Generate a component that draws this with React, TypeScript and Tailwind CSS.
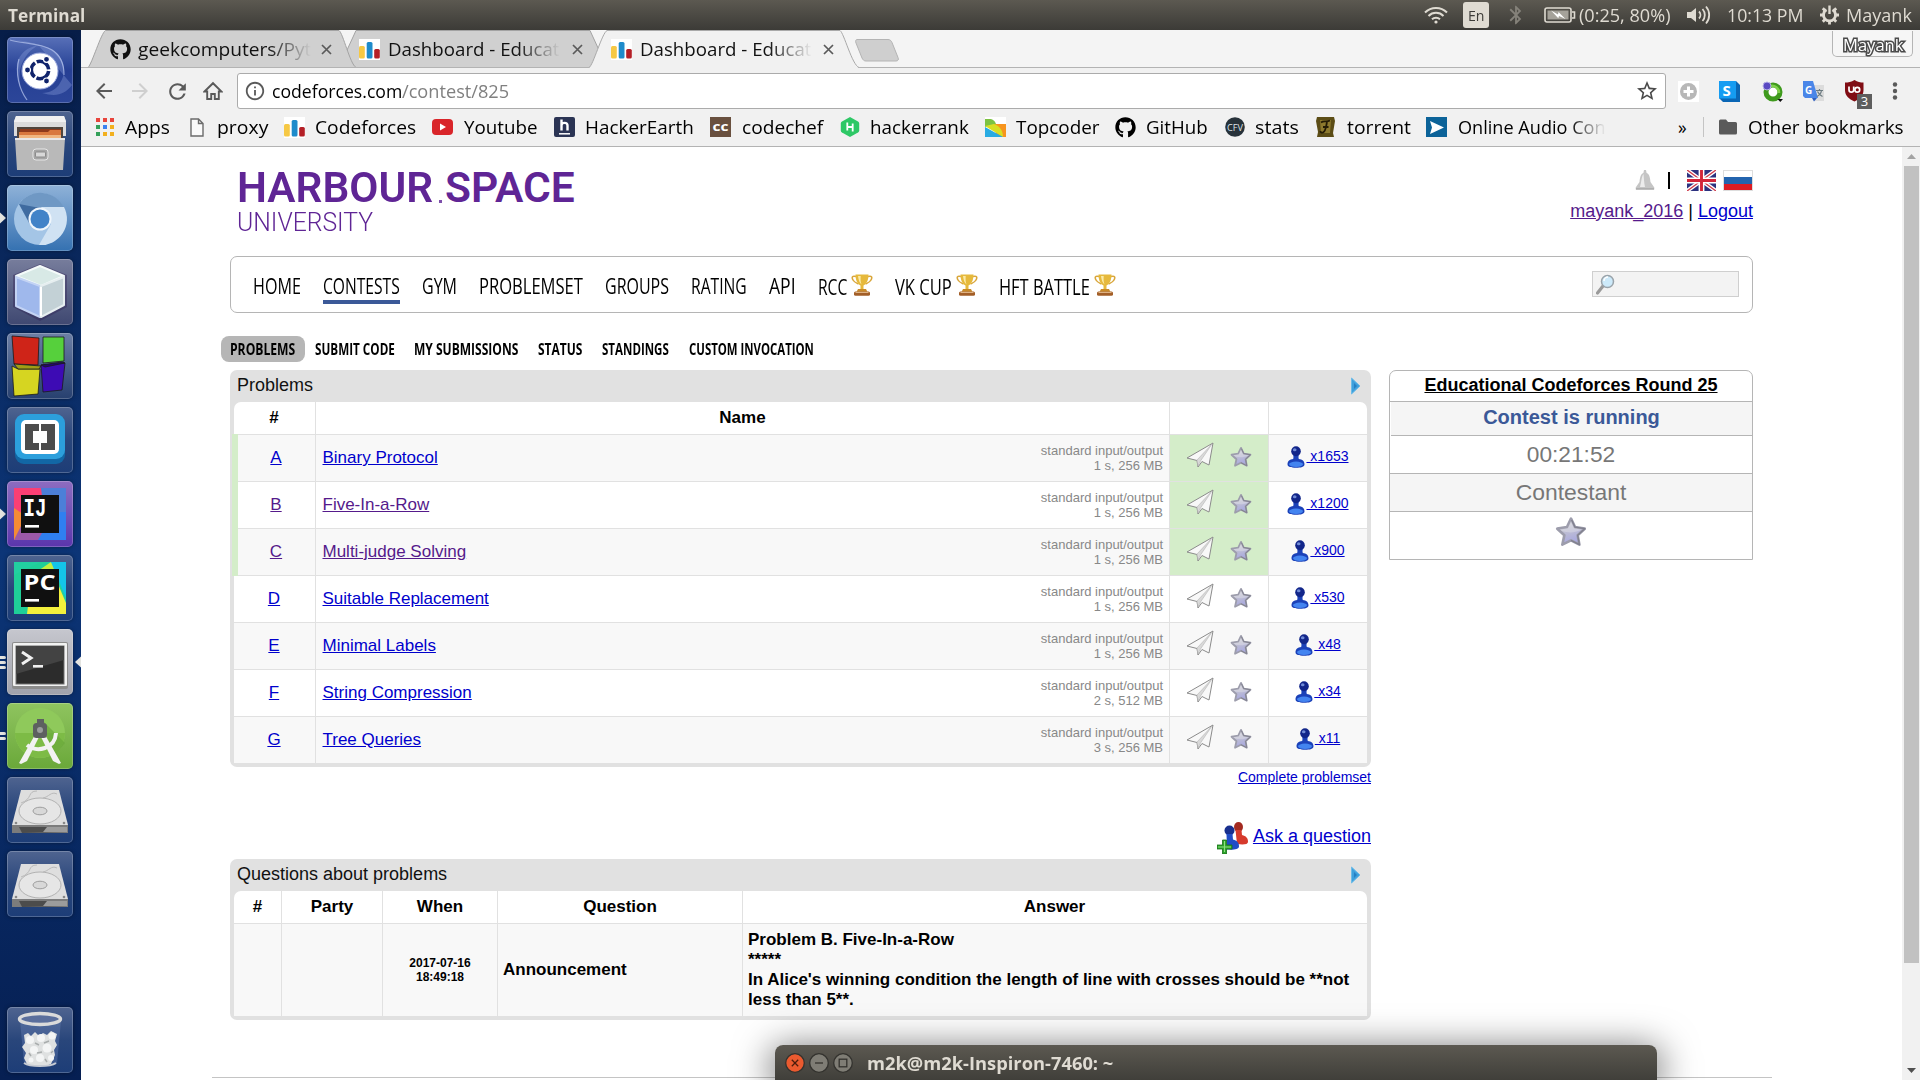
import React, { useLayoutEffect, useRef } from "react";
import { FaGithub } from "react-icons/fa";
import {
  MdArrowBack,
  MdArrowForward,
  MdBluetooth,
  MdInfoOutline,
  MdRefresh,
  MdStarBorder,
} from "react-icons/md";

/* Text stretched or condensed horizontally so that it fills its own box. */
function Fit({ className = "", children }: { className?: string; children: React.ReactNode }) {
  const outer = useRef<HTMLSpanElement>(null);
  const inner = useRef<HTMLSpanElement>(null);
  useLayoutEffect(() => {
    if (outer.current && inner.current) {
      const ratio = outer.current.clientWidth / inner.current.offsetWidth;
      inner.current.style.transform = `scaleX(${ratio})`;
    }
  });
  return (
    <span ref={outer} className={"inline-block shrink-0 whitespace-nowrap text-left " + className}>
      <span ref={inner} className="inline-block origin-left">
        {children}
      </span>
    </span>
  );
}

/* ---------- top panel ---------- */

function TopPanel() {
  return (
    <header className="flex h-[30px] shrink-0 items-center bg-linear-to-b from-[#5c5951] to-[#3c3b37] text-[17.5px] leading-[30px] text-[#dfdbd2]">
      <Fit className="ml-[8px] w-[77px] font-bold">Terminal</Fit>
      <svg className="ml-[1339px] shrink-0" width="24" height="20" viewBox="0 0 24 20" fill="none" stroke="#dfdbd2" strokeWidth="2">
        <path d="M1 7.5a15.5 15.5 0 0 1 22 0M4.5 11a10.500 10.500 0 0 1 15 0M8 14.300a5.700 5.700 0 0 1 8 0" />
        <circle cx="12" cy="17" r="1.600" fill="#dfdbd2" stroke="none" />
      </svg>
      <span className="ml-[15px] flex h-[26px] w-[26px] shrink-0 items-center justify-center rounded-[3px] bg-[#dfdbd2] text-[#3c3b37]">
        <Fit className="w-[17px] text-[15px]">En</Fit>
      </span>
      <MdBluetooth className="ml-[16px] shrink-0 text-[#85827a]" size={22} />
      <svg className="ml-[17px] shrink-0" width="32" height="16" viewBox="0 0 32 16">
        <rect x="1" y="1" width="26" height="14" rx="2" fill="none" stroke="#dfdbd2" strokeWidth="1.600" />
        <rect x="3.500" y="3.500" width="21" height="9" fill="#a5a29a" />
        <path d="M28 5h2.500v6H28" fill="none" stroke="#dfdbd2" strokeWidth="1.600" />
        <path d="M7 3.500l7 4 .5-2.500 7 7-6.500-3-.7 2.300z" fill="#fff" />
      </svg>
      <Fit className="ml-[3px] w-[92px]">(0:25, 80%)</Fit>
      <svg className="ml-[15px] shrink-0" width="25" height="20" viewBox="0 0 25 20">
        <path d="M1 7h4l5-4v14l-5-4H1z" fill="#dfdbd2" />
        <path d="M13 6.500a5 5 0 0 1 0 7M16.500 4a9 9 0 0 1 0 12M20 1.500a13 13 0 0 1 0 17" fill="none" stroke="#dfdbd2" strokeWidth="1.800" />
      </svg>
      <Fit className="ml-[16px] w-[76px]">10:13 PM</Fit>
      <svg className="ml-[16px] shrink-0" width="21" height="20" viewBox="-10.500 -10 21 20" fill="none" stroke="#dfdbd2">
        <path d="M-3 -5.200a6 6 0 1 0 6 0" strokeWidth="2.800" />
        <path d="M0 -9.500V-1" strokeWidth="2.400" />
        <path d="M-9.500 0h3M9.500 0h-3M0 9.500v-3M-6.700 6.700l2.100-2.100M6.700 6.700l-2.100-2.100M-6.700 -6.700l2.100 2.100M6.700 -6.700l-2.100 2.100" strokeWidth="2.800" />
      </svg>
      <Fit className="ml-[6px] w-[66px]">Mayank</Fit>
    </header>
  );
}

/* ---------- launcher ---------- */

function UbuntuIcon() {
  return (
    <svg width="66" height="66" viewBox="0 0 66 66">
      <path d="M3 2c25 4 48 6 54 31-1-14-11-24-26-24C21 9 12 17 10 27c-1 10 3 30 12 37C8 52 8 20 32 8" fill="#8fa3e0" opacity=".35" />
      <path d="M33 10a23 23 0 0 1 20 36c-3 6-10 10-18 10 14 4 22 2 30-8" fill="#8fa3e0" opacity=".35" />
      <path d="M3 3c20 6 54 0 54 35M12 22c-4 14 0 30 8 41" fill="none" stroke="#b8c6ee" strokeWidth="1.200" opacity=".7" />
      <circle cx="33" cy="34" r="18" fill="#fff" stroke="#9aa8dd" strokeWidth="1" />
      <circle cx="33" cy="33" r="8.700" fill="none" stroke="#10236b" strokeWidth="3.600" strokeDasharray="16.200 2" strokeDashoffset="-1" />
      <g fill="#10236b" stroke="#fff" strokeWidth="1.200">
        <circle cx="20.500" cy="33" r="3" />
        <circle cx="39.500" cy="22.300" r="3" />
        <circle cx="39.500" cy="44" r="3" />
      </g>
    </svg>
  );
}

function FilesIcon() {
  return (
    <svg width="66" height="66" viewBox="0 0 66 66">
      <path d="M9 5h48l2 5v15H7V10z" fill="#dcdcdc" />
      <path d="M9 5h48l2 6H7z" fill="#f1f1f1" />
      <path d="M10 16h46v12H10z" fill="#50463e" />
      <path d="M13 18h41v3H13z" fill="#8e3a1c" />
      <path d="M12 21h29l2-2h11v8H12z" fill="#d9783e" />
      <path d="M12 24h42v4H12z" fill="#f0b680" />
      <path d="M8 27h50l-2 32H10z" fill="#b9b9b9" />
      <path d="M8 27h50v2H8z" fill="#e8e8e8" />
      <rect x="26" y="38" width="15" height="11" rx="3" fill="#a5a5a5" stroke="#e6e6e6" />
      <rect x="28.500" y="41" width="10" height="5" rx="1" fill="#d8d8d8" stroke="#8b8b8b" />
    </svg>
  );
}

function ChromiumIcon() {
  return (
    <svg width="66" height="66" viewBox="0 0 66 66">
      <circle cx="33" cy="34" r="26" fill="#a4c5e6" />
      <path d="M12 19a26 26 0 0 1 45 4H34L22 38z" fill="#6f98c4" />
      <path d="M12 19l11 20 10-16z" fill="#3f6ba0" />
      <path d="M34 22h23a26 26 0 0 1-25 38l12-21z" fill="#d0e2f3" />
      <circle cx="33" cy="34" r="11.500" fill="#f0f6fc" />
      <circle cx="33" cy="34" r="9.500" fill="#4283c8" />
    </svg>
  );
}

function CubeIcon() {
  return (
    <svg width="66" height="66" viewBox="0 0 66 66">
      <path d="M33 5l27 11v32L33 62 6 48V16z" fill="#2b1a4d" opacity=".35" />
      <path d="M33 7l24 10-23 10L9 17z" fill="#d8e9e6" stroke="#f4fbfa" strokeLinejoin="round" strokeWidth="2" />
      <path d="M9 18l24 9v31L9 47z" fill="#9fb8ec" stroke="#c3d3f4" strokeLinejoin="round" strokeWidth="2" />
      <path d="M57 18l-23 9v31l23-12z" fill="#c3d1d6" stroke="#e6eef0" strokeLinejoin="round" strokeWidth="2" />
      <path d="M34 28v29" stroke="#fff" strokeWidth="2" />
    </svg>
  );
}

function BlocksIcon() {
  return (
    <svg width="66" height="66" viewBox="0 0 66 66" stroke="#1a1a1a" strokeWidth=".800">
      <path d="M5 3l27 2-1 27-24-1z" fill="#cf2418" />
      <path d="M36 4h21v24l-21 2z" fill="#56d03c" />
      <path d="M5 33l6 3h22l-2 25-24 2z" fill="#d6d521" />
      <path d="M11 36h21l2-3-27-2z" fill="#a09d16" />
      <path d="M34 32l24-2-3 27-19 2z" fill="#3d0bb4" />
      <path d="M34 32l4 2 20-4-3-1z" fill="#24056f" />
    </svg>
  );
}

function BracketsIcon() {
  return (
    <svg width="66" height="66" viewBox="0 0 66 66">
      <rect x="8" y="9" width="50" height="48" rx="9" fill="#1267a5" />
      <rect x="8" y="7" width="50" height="45" rx="9" fill="#2c9fdc" />
      <rect x="14" y="13" width="38" height="34" rx="5" fill="#fff" />
      <path d="M18 17h14v7h-6v12h6v7H18zM48 17H34v7h6v12h-6v7h14z" fill="#4c4c4c" />
    </svg>
  );
}

function IdeIcon({ name }: { name: "IJ" | "PC" }) {
  const ij = name === "IJ";
  return (
    <svg width="66" height="66" viewBox="0 0 66 66">
      <rect x="7" y="7" width="52" height="52" fill={ij ? "#2f7ff0" : "#22cfa0"} />
      {ij ? (
        <>
          <path d="M7 7h27l6 14-33 14z" fill="#fb3f74" />
          <path d="M7 27l12 8-8 24H7z" fill="#f58b35" />
          <path d="M7 59l12-24 20 10-8 14z" fill="#9b59a8" />
          <path d="M34 7h25v24H37z" fill="#4c7fd8" />
        </>
      ) : (
        <>
          <path d="M7 59V20L34 7h8l-6 40-18 12z" fill="#1fcf98" />
          <path d="M28 18L44 7l9 12-8 4z" fill="#c5ee3f" />
          <path d="M44 7h15v36z" fill="#14c4e8" />
          <path d="M48 22l11 26v11H20l2-16z" fill="#f3f03c" />
        </>
      )}
      <rect x="14" y="14" width="38" height="38" fill="#101010" />
      <text x="16.500" y="35" fill="#fff" fontSize={ij ? 25 : 22} fontWeight="700" fontFamily={ij ? "Liberation Mono" : "Open Sans"} textLength={ij ? 23 : 32} lengthAdjust="spacingAndGlyphs">
        {name}
      </text>
      <rect x="18" y="44" width="14" height="2.600" fill="#fff" />
    </svg>
  );
}

function TerminalIcon() {
  return (
    <svg width="66" height="66" viewBox="0 0 66 66">
      <rect x="5" y="13" width="56" height="47" rx="2" fill="#8c8c8c" />
      <rect x="6" y="14" width="54" height="43" rx="1" fill="#f2f2f2" />
      <rect x="9" y="17" width="48" height="38" fill="#2c2c2c" stroke="#6e6e6e" />
      <path d="M9 17h48v14L9 45z" fill="#434343" />
      <path d="M15 23l9 6-9 6" fill="none" stroke="#f0f0f0" strokeWidth="3" />
      <rect x="26" y="36" width="10" height="2.600" fill="#f0f0f0" />
    </svg>
  );
}

function StudioIcon() {
  return (
    <svg width="66" height="66" viewBox="0 0 66 66">
      <circle cx="33" cy="30" r="25" fill="#8fc95b" />
      <path d="M8 30h50a25 25 0 0 1-50 0z" fill="#7dbb46" />
      <path d="M36 18l22 22-12 14z" fill="#6aa83a" opacity=".7" />
      <path d="M29 30L12 60l2 1 6-3 12-24zM37 30l17 30-2 1-6-3-12-24z" fill="#f2f2f2" />
      <path d="M20 42c10 8 28 4 29-12" fill="none" stroke="#f2f2f2" strokeWidth="4" />
      <rect x="30" y="16" width="7" height="7" fill="#5d6060" />
      <rect x="26" y="20" width="14" height="15" rx="3.500" fill="#5d6060" />
      <circle cx="33" cy="27" r="3" fill="#9a9d9d" />
    </svg>
  );
}

function DiskIcon() {
  return (
    <svg width="66" height="66" viewBox="0 0 66 66">
      <path d="M14 13h38l9 35H5z" fill="#dedede" />
      <path d="M5 48h56v8H5z" fill="#7c7c7c" />
      <path d="M12 50h48v5l-45 1z" fill="#4c4c4c" />
      <path d="M40 50h20v5H36z" fill="#9c9c9c" />
      <ellipse cx="33" cy="34" rx="21" ry="13" fill="#e6e6e6" stroke="#b2b2b2" />
      <path d="M30 14c-10 0-4 8-16 12M36 21c6-1 8-7 14-4" fill="none" stroke="#bababa" />
      <ellipse cx="33" cy="34" rx="7" ry="3.800" fill="#d8d8d8" stroke="#9e9e9e" />
      <circle cx="9" cy="46" r="1.300" fill="#888" />
      <circle cx="57" cy="46" r="1.300" fill="#888" />
    </svg>
  );
}

function TrashIcon() {
  return (
    <svg width="66" height="66" viewBox="0 0 66 66">
      <path d="M13 14h41l-4 42c-4 4-28 4-33 0z" fill="#7c93c8" opacity=".3" />
      <path d="M17 28l4-2 3 3 4-4 4 4 4-3 4 2 4-4 6 3-2 7 2 4-3 5 1 5-4 9c-6 3-18 3-24 0l-3-6 2-5-4-6 3-4z" fill="#dfe1e1" />
      <g fill="#f4f5f5">
        <circle cx="23" cy="33" r="4" />
        <circle cx="34" cy="31" r="4" />
        <circle cx="45" cy="29" r="3.500" />
        <circle cx="27" cy="43" r="4" />
        <circle cx="40" cy="41" r="4.500" />
        <circle cx="33" cy="51" r="4" />
        <circle cx="24" cy="53" r="2.500" />
        <circle cx="44" cy="51" r="3" />
      </g>
      <path d="M28 36l4 2M37 36l5-2M30 46l5-1M22 46l2 3M44 46l2-2M38 52l2 3" fill="none" stroke="#a9adad" strokeWidth="1.500" />
      <ellipse cx="33" cy="12" rx="20.500" ry="5.500" fill="#5a6e9c" stroke="#dadada" strokeWidth="3.500" />
      <path d="M17 56c6 4 26 4 32 0" fill="none" stroke="#c7cbd3" strokeWidth="2" />
    </svg>
  );
}

function Tile({ tone = "", running = "", focused = false, children }: { tone?: string; running?: string; focused?: boolean; children: React.ReactNode }) {
  return (
    <div className="flex h-[66px] shrink-0 items-center">
      <span className="flex w-[7px] flex-col gap-[2px]">
        {running === "arrow" && (
          <svg width="7" height="12" viewBox="0 0 7 12">
            <path d="M0 0.500l6 5.500-6 5.500z" fill="#e4e4e0" />
          </svg>
        )}
        {(running === "two" || running === "three") && <i className="h-[3px] w-[6px] rounded-r bg-[#e4e4e0]" />}
        {(running === "two" || running === "three") && <i className="h-[3px] w-[6px] rounded-r bg-[#e4e4e0]" />}
        {running === "three" && <i className="h-[3px] w-[6px] rounded-r bg-[#e4e4e0]" />}
      </span>
      <span className={"h-[66px] w-[66px] shrink-0 overflow-hidden rounded-[5px] shadow-[inset_0_0_0_1px_rgba(255,255,255,0.22),0_0_4px_rgba(0,0,0,0.4)] " + (tone || "bg-linear-to-b from-[#4f6490] via-[#29467b] to-[#1d3d77]")}>
        {children}
      </span>
      {focused && (
        <svg className="ml-[1px]" width="7" height="12" viewBox="0 0 7 12">
          <path d="M7 0.500L1 6l6 5.500z" fill="#e4e4e0" />
        </svg>
      )}
    </div>
  );
}

function Launcher() {
  return (
    <aside className="flex w-[81px] shrink-0 flex-col gap-[8px] bg-linear-to-b from-[#071d48] via-[#0c3577] to-[#061f52] pt-[7px]">
      <Tile tone="bg-linear-to-b from-[#5870b8] via-[#263f94] to-[#2c4699]"><UbuntuIcon /></Tile>
      <Tile><FilesIcon /></Tile>
      <Tile running="arrow" tone="bg-linear-to-b from-[#8fb2d8] to-[#3471b1]"><ChromiumIcon /></Tile>
      <Tile tone="bg-linear-to-b from-[#777d9c] to-[#3f4871]"><CubeIcon /></Tile>
      <Tile tone="bg-linear-to-b from-[#6c7fa5] to-[#27406f]"><BlocksIcon /></Tile>
      <Tile><BracketsIcon /></Tile>
      <Tile running="arrow" tone="bg-linear-to-b from-[#8d6cc0] to-[#5b35ac]"><IdeIcon name="IJ" /></Tile>
      <Tile><IdeIcon name="PC" /></Tile>
      <Tile running="three" focused tone="bg-linear-to-b from-[#c6c7ce] to-[#9fa1ab]"><TerminalIcon /></Tile>
      <Tile running="two" tone="bg-linear-to-b from-[#8fc45f] to-[#6aa839]"><StudioIcon /></Tile>
      <Tile><DiskIcon /></Tile>
      <Tile><DiskIcon /></Tile>
      <div className="mt-[82px]">
        <Tile><TrashIcon /></Tile>
      </div>
    </aside>
  );
}

/* ---------- browser chrome ---------- */

function CodeforcesMark() {
  return (
    <svg className="shrink-0" width="21" height="21" viewBox="0 0 21 21">
      <rect width="21" height="21" fill="#fff" />
      <rect x="0" y="7" width="5.800" height="12.500" rx="1.500" fill="#f6c844" />
      <rect x="7.700" y="3" width="5.800" height="16.500" rx="1.500" fill="#1e8bcb" />
      <rect x="15.200" y="10" width="5.600" height="9.500" rx="1.500" fill="#b41f26" />
    </svg>
  );
}

function CloseX({ className }: { className: string }) {
  return (
    <svg className={"shrink-0 " + className} width="11" height="11" viewBox="0 0 11 11" stroke="#5a5a5a" strokeWidth="1.700">
      <path d="M1 1l9 9M10 1l-9 9" />
    </svg>
  );
}

function FadeText({ className, children }: { className: string; children: React.ReactNode }) {
  return <span className={"shrink-0 mask-r-from-75% mask-r-to-100% " + className}>{children}</span>;
}

function TabStrip() {
  return (
    <div className="relative h-[38px] shrink-0 bg-[#f4f4f4]">
      <svg className="absolute inset-0" width="1839" height="38" viewBox="81 30 1839 38">
        <path d="M339 67.500L356 30.500H590L607 67.500z" fill="#d0d0d0" stroke="#a3a3a3" />
        <path d="M88 67.500C92 64 101 33 105.500 30.500H339C343 33 350 64 356 67.500z" fill="#d0d0d0" stroke="#a3a3a3" />
        <path d="M81 67.500H1920" stroke="#b3b3b3" />
        <path d="M589 68C593 66 602 33 607 30.500H840C844 33 852 65 859 68z" fill="#f1f1f1" />
        <path d="M589 67.500C593 66 602 33 607 30.500H840C844 33 852 65 859 67.500" fill="none" stroke="#a9a9a9" />
        <path d="M857 39.500H888c2 0 3 1 4 3l6 15c1 2 0 3.500-2 3.500h-30c-2 0-3-1-4-3l-6-15c-1-2 0-3.500 1-3.500z" fill="#cfcfcf" stroke="#b4b4b4" />
      </svg>
      <div className="relative flex h-[38px] items-center pl-[29px] text-[17.500px] leading-[38px] text-[#111]">
        <FaGithub size={21} className="shrink-0" />
        <FadeText className="ml-[7px]"><Fit className="w-[173px]">geekcomputers/Pyt</Fit></FadeText>
        <CloseX className="ml-[10px]" />
        <span className="ml-[27px]"><CodeforcesMark /></span>
        <FadeText className="ml-[8px]"><Fit className="w-[172px]">Dashboard - Educat</Fit></FadeText>
        <CloseX className="ml-[12px]" />
        <span className="ml-[28px]"><CodeforcesMark /></span>
        <FadeText className="ml-[8px]"><Fit className="w-[172px]">Dashboard - Educat</Fit></FadeText>
        <CloseX className="ml-[11px]" />
        <span className="mt-[-11px] ml-[998px] flex h-[26px] w-[81px] shrink-0 items-end justify-center rounded-b-[5px] border border-t-0 border-[#b5b5b5] bg-[#f6f6f6] text-[16px] leading-[21px] text-white [-webkit-text-stroke:3px_#4a4a4a] [paint-order:stroke_fill]">
          <Fit className="w-[60px]">Mayank</Fit>
        </span>
      </div>
    </div>
  );
}

function Toolbar() {
  return (
    <div className="flex h-[46px] shrink-0 items-center pl-[11px] text-[#5a5a5a]">
      <MdArrowBack size={24} className="shrink-0" />
      <MdArrowForward size={24} className="ml-[12px] shrink-0 text-[#cfcfcf]" />
      <MdRefresh size={25} className="ml-[13px] shrink-0" />
      <svg className="ml-[13px] shrink-0" width="20" height="20" viewBox="0 0 20 20" fill="none" stroke="#5a5a5a" strokeWidth="1.900">
        <path d="M1.500 10.500L10 2.200l8.500 8.300h-2.700V18h-4v-5H8.200v5H4.200v-7.500z" />
      </svg>
      <div className="ml-[14px] flex h-[36px] w-[1429px] shrink-0 items-center rounded-[3px] border border-[#ababab] bg-white pl-[6px] text-[17.500px] leading-[34px] text-black">
        <MdInfoOutline size={22} className="shrink-0 text-[#5a5a5a]" />
        <Fit className="ml-[6px] w-[130px]">codeforces.com</Fit>
        <Fit className="w-[107px] text-[#808080]">/contest/825</Fit>
        <MdStarBorder size={24} className="mr-[6px] ml-auto text-[#4a4a4a]" />
      </div>
      <svg className="ml-[12px] shrink-0" width="21" height="21" viewBox="0 0 21 21">
        <rect width="21" height="21" fill="#fff" />
        <circle cx="10.500" cy="10.500" r="8.500" fill="#b7b7b7" />
        <path d="M10.500 5.500v10M5.500 10.500h10" stroke="#fff" strokeWidth="3" />
      </svg>
      <svg className="ml-[20px] shrink-0" width="21" height="21" viewBox="0 0 21 21">
        <path d="M0 0h17l4 4v17H4l-4-4z" fill="#0a66b5" />
        <rect width="17" height="17.500" fill="#159cf2" />
        <text x="3.500" y="14.500" fontSize="15" fontWeight="700" fill="#fff" fontFamily="Open Sans">S</text>
      </svg>
      <svg className="ml-[22px] shrink-0" width="21" height="21" viewBox="0 0 21 21">
        <circle cx="11" cy="11" r="7" fill="#fff" stroke="#3f9a1d" strokeWidth="5" />
        <path d="M8 5a7 7 0 0 1 9 7" fill="none" stroke="#7fd14a" strokeWidth="2.500" />
        <circle cx="5" cy="5" r="4" fill="#5a49c2" stroke="#b5b0e6" />
        <path d="M15.500 18h5.500l-2.750 3z" fill="#111" />
      </svg>
      <svg className="ml-[20px] shrink-0" width="21" height="21" viewBox="0 0 21 21">
        <path d="M8 4h13v16H12z" fill="#dcdcdc" />
        <path d="M0 0h10l5 17H2l-2-2z" fill="#4a86e8" />
        <path d="M9 17h5l-3 3.500z" fill="#2f5fc0" />
        <text x="2" y="12.500" fontSize="10" fontWeight="700" fill="#fff" fontFamily="Open Sans">G</text>
        <path d="M13 9.500h7M16.500 8v1.500M18.500 9.500c-.5 3-2.500 5-4.500 6M14.500 10.500c1 2 3 4 5 5" stroke="#6b7a80" fill="none" strokeWidth="1.200" />
      </svg>
      <span className="relative ml-[20px] h-[22px] w-[28px] shrink-0">
        <svg width="22" height="22" viewBox="0 0 22 22">
          <path d="M10.500 0c3 2 6 2.500 9 2.500V10c0 6-4 9-9 11.500C5 19 1 16 1 10V2.500c3 0 6.500-.500 9.500-2.500z" fill="#800d14" />
          <path d="M5 6.500v3.300a2.300 2.300 0 0 0 4.700 0V6.500" fill="none" stroke="#fff" strokeWidth="1.700" />
          <circle cx="13.300" cy="9.700" r="2.400" fill="none" stroke="#fff" strokeWidth="1.700" />
        </svg>
        <b className="absolute top-[14px] left-[13px] flex h-[15px] w-[15px] items-center justify-center bg-[#5e5e5e] text-[13px] leading-[15px] font-normal text-white">3</b>
      </span>
      <svg className="ml-[20px] shrink-0" width="6" height="18" viewBox="0 0 6 18" fill="#5a5a5a">
        <circle cx="3" cy="2.500" r="2.200" />
        <circle cx="3" cy="9" r="2.200" />
        <circle cx="3" cy="15.500" r="2.200" />
      </svg>
    </div>
  );
}

const APP_COLORS = ["#e8453c", "#e8453c", "#e8453c", "#34a05a", "#3b82f0", "#f2b01e", "#34a05a", "#f2b01e", "#f2b01e"];

function BookmarksBar() {
  return (
    <div className="flex h-[33px] shrink-0 items-center border-b border-[#b3b3b3] pb-[6px] pl-[15px] text-[17.500px] leading-[27px] text-black">
      <span className="grid shrink-0 grid-cols-[4px_4px_4px] gap-[3px]">
        {APP_COLORS.map((c, i) => (
          <i key={i} className="h-[4px] w-[4px]" style={{ backgroundColor: c }} />
        ))}
      </span>
      <Fit className="ml-[11px] w-[45px]">Apps</Fit>
      <svg className="ml-[20px] shrink-0" width="14" height="19" viewBox="0 0 14 19" fill="#fafafa" stroke="#6b6b6b" strokeWidth="1.400">
        <path d="M1 1h7.500L13 5.500V18H1zM8.500 1v4.500H13" />
      </svg>
      <Fit className="ml-[13px] w-[51px]">proxy</Fit>
      <span className="ml-[16px] shrink-0"><CodeforcesMark /></span>
      <Fit className="ml-[10px] w-[101px]">Codeforces</Fit>
      <svg className="ml-[16px] shrink-0" width="21" height="16" viewBox="0 0 21 16">
        <rect width="21" height="16" rx="4" fill="#d9252a" />
        <path d="M8 4.500l6 3.500-6 3.500z" fill="#fff" />
      </svg>
      <Fit className="ml-[11px] w-[74px]">Youtube</Fit>
      <svg className="ml-[16px] shrink-0" width="21" height="20" viewBox="0 0 21 20">
        <rect width="21" height="20" rx="2" fill="#2b3454" />
        <path d="M7.500 2.500v11M7.500 8.500c0-3.500 6-3.500 6 0v5" stroke="#fff" strokeWidth="2.400" fill="none" />
        <path d="M5 16.800h11" stroke="#fff" strokeWidth="1.500" />
      </svg>
      <Fit className="ml-[10px] w-[109px]">HackerEarth</Fit>
      <svg className="ml-[16px] shrink-0" width="21" height="20" viewBox="0 0 21 20">
        <rect width="21" height="20" fill="#69503f" />
        <text x="2.500" y="14" fontSize="13" fontWeight="700" fill="#fff" fontFamily="Open Sans" textLength="16" lengthAdjust="spacingAndGlyphs">cc</text>
      </svg>
      <Fit className="ml-[11px] w-[81px]">codechef</Fit>
      <svg className="ml-[17px] shrink-0" width="20" height="20" viewBox="0 0 20 20">
        <path d="M10 0l8 4.500q1.200.700 1.200 2v7q0 1.300-1.200 2L10 20l-8-4.500q-1.200-.700-1.200-2v-7q0-1.300 1.200-2z" fill="#2ec866" />
        <path d="M7.300 5.500v8M12.700 6.500v8M7.300 10h5.400" stroke="#fff" strokeWidth="1.800" />
      </svg>
      <Fit className="ml-[10px] w-[99px]">hackerrank</Fit>
      <svg className="ml-[16px] shrink-0" width="21" height="20" viewBox="0 0 21 20">
        <rect width="21" height="20" fill="#fff" />
        <path d="M8 7h13v13H12z" fill="#f7941e" />
        <path d="M0 2h4c4 0 6 2 7 5L0 10z" fill="#7cc242" />
        <path d="M0 9l9-2c6 2 9 7 9 13z" fill="#d7df23" />
        <path d="M0 10l18 10H0z" fill="#29abe2" />
      </svg>
      <Fit className="ml-[10px] w-[83px]">Topcoder</Fit>
      <FaGithub size={21} className="ml-[16px] shrink-0" />
      <Fit className="ml-[10px] w-[62px]">GitHub</Fit>
      <svg className="ml-[17px] shrink-0" width="20" height="20" viewBox="0 0 20 20">
        <circle cx="10" cy="10" r="9.800" fill="#27323a" />
        <text x="2" y="13.500" fontSize="9.500" fill="#dfe5e8" fontFamily="Open Sans" textLength="16" lengthAdjust="spacingAndGlyphs">CFV</text>
      </svg>
      <Fit className="ml-[10px] w-[44px]">stats</Fit>
      <svg className="ml-[16px] shrink-0" width="21" height="20" viewBox="0 0 21 20">
        <path d="M2 0h17l1 4-2 12 1 4H2l1-5L1 4z" fill="#5c4d16" />
        <path d="M5 3h11l-1 13H6z" fill="#8d7a2e" />
        <path d="M6 5.500c3-2.500 5 0 9-2M12 5c-1 4-1 9-4 10.500-1.500.5-2.500 0-2.500-1.500M8 10h5.500" stroke="#251c05" strokeWidth="1.800" fill="none" />
      </svg>
      <Fit className="ml-[11px] w-[64px]">torrent</Fit>
      <svg className="ml-[15px] shrink-0" width="21" height="20" viewBox="0 0 21 20">
        <rect width="21" height="20" fill="#0c6399" />
        <path d="M4 4l14 6.500L4 17l2-6.500z" fill="#fff" />
      </svg>
      <FadeText className="ml-[11px]"><Fit className="w-[148px]">Online Audio Con</Fit></FadeText>
      <Fit className="ml-[72px] w-[9px]">»</Fit>
      <i className="ml-[16px] h-[20px] w-px shrink-0 bg-[#c4c4c4]" />
      <svg className="ml-[15px] shrink-0" width="18" height="16" viewBox="0 0 18 16">
        <path d="M0 2q0-1.500 1.500-1.500H7L9 3h7.500Q18 3 18 4.500v9.500q0 1.500-1.500 1.500h-15Q0 15.500 0 14z" fill="#5a5a5a" />
      </svg>
      <Fit className="ml-[11px] w-[156px]">Other bookmarks</Fit>
    </div>
  );
}

/* ---------- web page ---------- */

function Trophy() {
  return (
    <svg className="ml-[4px] shrink-0" width="22" height="22" viewBox="0 0 22 22">
      <path d="M5 2.500C1 1.500 0.500 3.500 2 6c1.200 2.200 3.500 3 5.500 4M17 2.500c4-1 4.500 1 3 3.500-1.200 2.200-3.500 3-5.500 4" fill="none" stroke="#d9a63a" strokeWidth="1.500" />
      <path d="M4.500 0.500h13c0 5-1.500 9-5 11v3.500h-3v-3.500c-3.500-2-5-6-5-11z" fill="#e6b93c" />
      <path d="M7 2c.5 4 1.500 7 3.500 8.500C9.500 8 9.500 5 9.700 2z" fill="#fbeaa5" />
      <path d="M7 15h8l1.500 3h-11z" fill="#c98a27" />
      <rect x="3" y="17.500" width="16" height="4.200" rx="1.500" fill="#a35f28" />
      <path d="M4.500 18.300h13" stroke="#ecc79b" />
    </svg>
  );
}

function Star({ size, className = "" }: { size: number; className?: string }) {
  return (
    <svg className={"shrink-0 " + className} width={size} height={size} viewBox="0 0 24 24">
      <defs>
        <linearGradient id="starFill" x1="0" y1="0" x2="0.300" y2="1">
          <stop offset="0" stopColor="#d8d8dc" />
          <stop offset="0.500" stopColor="#c0c0d2" />
          <stop offset="1" stopColor="#a8a8e0" />
        </linearGradient>
      </defs>
      <path d="M12 2l3 6.300 7.300 1.200-5.300 5 1.300 7-6.300-3.200L5.500 21.500l1.500-7L1.700 9.500l7.300-1.200z" fill="url(#starFill)" stroke="#9d9dac" strokeWidth="2" strokeLinejoin="round" />
      <path d="M12.500 3l2.500 5.300 7.300 1.200-5.300 5 1.300 7-6.300-3.200" fill="none" stroke="#80808e" strokeWidth="1" strokeLinejoin="round" />
      <path d="M12 3.500l2.300 5.500 6.200 1c-4 2.500-10 3-15 1.500L3.500 10l6-1z" fill="#fff" opacity=".25" />
    </svg>
  );
}

function Plane() {
  return (
    <svg className="shrink-0" width="28" height="26" viewBox="0 0 28 26">
      <path d="M1 16L27 1l-4 22-7-3.500-4 5.500-1-6.500z" fill="#f8f8f8" stroke="#8b8b8b" strokeLinejoin="round" />
      <path d="M11 18L26 2 14.500 19 12 24z" fill="#d9d9d9" stroke="#b5b5b5" strokeWidth=".600" />
    </svg>
  );
}

function Person() {
  return (
    <svg className="shrink-0" width="18" height="22" viewBox="0 0 18 22">
      <path d="M6 8h6c-.5 2-.7 3.500-.2 5 3.500.3 5.700 2.300 5.700 5.200 0 2.800-3.500 3.500-8.500 3.500S.5 21 .5 18.200C.5 15.300 2.700 13.300 6.200 13c.5-1.500.3-3-.2-5z" fill="#1b41b8" />
      <ellipse cx="9" cy="18.300" rx="7" ry="2.700" fill="#4384f0" />
      <ellipse cx="9" cy="5.300" rx="4.800" ry="5" fill="#12268a" />
      <ellipse cx="7.700" cy="3.800" rx="1.800" ry="1.500" fill="#6f8ad6" />
    </svg>
  );
}

function BlueArrow() {
  return (
    <svg width="10" height="18" viewBox="0 0 10 18">
      <path d="M0.500 1l8.500 8-8.500 8z" fill="#3ea0dc" stroke="#6cbce8" strokeLinejoin="round" />
      <path d="M3 6v6l3-3z" fill="#2680c4" />
    </svg>
  );
}

const LINK = "text-[#0000cc] underline";
const VISITED = "text-[#551a8b] underline";

function Masthead() {
  return (
    <div className="flex h-[109px] justify-between">
      <div className="flex flex-col pl-[7px] font-['Roboto'] text-[#5f2595]">
        <div className="mt-[21px] flex h-[40px] text-[42.500px] leading-[40px] font-semibold">
          <Fit className="w-[196px]">HARBOUR</Fit>
          <span className="mt-[32px] ml-[6px] h-[3px] w-[3px] bg-[#7d4fab]" />
          <Fit className="ml-[3px] w-[130px]">SPACE</Fit>
        </div>
        <Fit className="mt-[2px] w-[136px] text-[26px] leading-[24px] font-light">UNIVERSITY</Fit>
      </div>
      <div className="flex flex-col items-end text-[18px]">
        <div className="mt-[22px] flex h-[22px] items-center">
          <svg width="20" height="22" viewBox="0 0 20 22">
            <path d="M9 1h2l.6 3c3 1 3.500 5 3.900 9l3.800 5.500v2H.7v-2L4.500 13c.4-4 .9-8 3.900-9z" fill="#c5c5c5" />
            <path d="M8.500 5c-2 2-2 8-3.500 13h5c-1-4-1-9-1.500-13z" fill="#ececec" />
            <path d="M1 20h18" stroke="#999" />
          </svg>
          <span className="mx-[13px] h-[17px] w-[2px] bg-black" />
          <svg className="ml-[4px]" width="29" height="21" viewBox="0 0 30 21" preserveAspectRatio="none">
            <rect width="30" height="21" fill="#2d3280" />
            <path d="M0 0l30 21M30 0L0 21" stroke="#fff" strokeWidth="4" />
            <path d="M0 0l30 21M30 0L0 21" stroke="#cf3b4c" strokeWidth="1.400" />
            <path d="M15 0v21M0 10.500h30" stroke="#fff" strokeWidth="6" />
            <path d="M15 0v21M0 10.500h30" stroke="#d3253a" strokeWidth="3" />
          </svg>
          <span className="ml-[7px] flex h-[21px] w-[30px] flex-col border border-[#ddd]">
            <i className="grow bg-white" />
            <i className="h-[7px] bg-[#2364ae]" />
            <i className="h-[6px] bg-[#dc1c23]" />
          </span>
        </div>
        <div className="mt-[8px] leading-[24px]">
          <a className={VISITED}>mayank_2016</a> | <a className={LINK}>Logout</a>
        </div>
      </div>
    </div>
  );
}

function MainNav() {
  return (
    <nav className="flex h-[57px] items-center rounded-[7px] border border-[#b5b5b5] pr-[13px] pl-[22px] text-[21.500px] leading-[55px] text-black">
      <Fit className="mt-px w-[48px]">HOME</Fit>
      <span className="relative mt-px ml-[22px] shrink-0">
        <Fit className="w-[77px]">CONTESTS</Fit>
        <i className="absolute top-[42px] left-0 h-[4px] w-[77px] bg-[#3b5998]" />
      </span>
      <Fit className="mt-px ml-[22px] w-[35px]">GYM</Fit>
      <Fit className="mt-px ml-[22px] w-[104px]">PROBLEMSET</Fit>
      <Fit className="mt-px ml-[22px] w-[64px]">GROUPS</Fit>
      <Fit className="mt-px ml-[22px] w-[56px]">RATING</Fit>
      <Fit className="mt-px ml-[22px] w-[27px]">API</Fit>
      <Fit className="mt-[3px] ml-[22px] w-[29px]">RCC</Fit>
      <Trophy />
      <Fit className="mt-[3px] ml-[22px] w-[57px]">VK CUP</Fit>
      <Trophy />
      <Fit className="mt-[3px] ml-[21px] w-[91px]">HFT BATTLE</Fit>
      <Trophy />
      <span className="mb-px ml-auto flex h-[26px] w-[147px] items-center border border-[#cfcfcf] bg-[#f3f3f3] pl-[3px]">
        <svg width="19" height="21" viewBox="0 0 19 21">
          <path d="M7 12L1.500 19" stroke="#9a9a9a" strokeWidth="3.200" strokeLinecap="round" />
          <circle cx="11.500" cy="7.500" r="6" fill="#cdeafa" stroke="#9aa3aa" strokeWidth="1.500" />
          <path d="M8 7a4 4 0 0 1 4-4" stroke="#fff" strokeWidth="1.500" fill="none" />
        </svg>
      </span>
    </nav>
  );
}

function SubNav() {
  return (
    <nav className="mt-[23px] ml-[-9px] flex h-[26px] text-[15.500px] leading-[27px] font-bold text-black">
      <span className="flex h-[26px] w-[84px] rounded-[8px] bg-[#b6b6b6] pl-[9px]">
        <Fit className="w-[65px]">PROBLEMS</Fit>
      </span>
      <Fit className="ml-[10px] w-[80px]">SUBMIT CODE</Fit>
      <Fit className="ml-[19px] w-[104px]">MY SUBMISSIONS</Fit>
      <Fit className="ml-[20px] w-[44px]">STATUS</Fit>
      <Fit className="ml-[20px] w-[67px]">STANDINGS</Fit>
      <Fit className="ml-[20px] w-[125px]">CUSTOM INVOCATION</Fit>
    </nav>
  );
}

function Panel({ title, children }: { title: string; children: React.ReactNode }) {
  return (
    <section className="rounded-[7px] bg-[#e1e1e1] px-[4px] pb-[4px]">
      <div className="flex h-[32px] items-center justify-between pr-[6px] pl-[3px]">
        <h2 className="pb-[2px] text-[18px] leading-[28px] text-[#111]">{title}</h2>
        <BlueArrow />
      </div>
      <div className="rounded-t-[7px] bg-white text-[17px]">{children}</div>
    </section>
  );
}

const PROBLEMS = [
  { id: "A", name: "Binary Protocol", limits: "1 s, 256 MB", solved: "x1653", done: true, visited: false },
  { id: "B", name: "Five-In-a-Row", limits: "1 s, 256 MB", solved: "x1200", done: true, visited: true },
  { id: "C", name: "Multi-judge Solving", limits: "1 s, 256 MB", solved: "x900", done: true, visited: true },
  { id: "D", name: "Suitable Replacement", limits: "1 s, 256 MB", solved: "x530", done: false, visited: false },
  { id: "E", name: "Minimal Labels", limits: "1 s, 256 MB", solved: "x48", done: false, visited: false },
  { id: "F", name: "String Compression", limits: "2 s, 512 MB", solved: "x34", done: false, visited: false },
  { id: "G", name: "Tree Queries", limits: "3 s, 256 MB", solved: "x11", done: false, visited: false },
];

function ProblemsTable() {
  return (
    <Panel title="Problems">
      <div className="grid h-[33px] grid-cols-[82px_854px_99px_98px] border-b border-[#e1e1e1] text-center leading-[31px] font-bold">
        <span className="border-r border-[#e1e1e1] pr-[1px]">#</span>
        <span className="border-r border-[#e1e1e1]">Name</span>
        <span className="border-r border-[#e1e1e1]" />
        <span />
      </div>
      {PROBLEMS.map((p, i) => (
        <div
          key={p.id}
          className={
            "relative grid grid-cols-[82px_854px_99px_98px] border-[#e1e1e1] " +
            (i === PROBLEMS.length - 1 ? "h-[46px] " : "h-[47px] border-b ") +
            (i % 2 === 0 ? "bg-[#f8f8f8]" : "bg-white")
          }
        >
          {p.done && <i className="absolute -top-px left-[-2px] h-[48px] w-[6px] bg-[#d4edc9]" />}
          <span className={"border-r border-[#e1e1e1] text-center leading-[46px] " + (p.done ? "pl-[3px]" : "pr-[1px]")}>
            <a className={p.visited ? VISITED : LINK}>{p.id}</a>
          </span>
          <span className="flex justify-between border-r border-[#e1e1e1] pr-[6px] pl-[6.500px]">
            <a className={"leading-[46px] " + (p.visited ? VISITED : LINK)}>{p.name}</a>
            <span className="pt-[8px] text-right text-[13px] leading-[15px] text-[#888]">
              standard input/output
              <br />
              {p.limits}
            </span>
          </span>
          <span className={"flex border-r border-[#e1e1e1] pt-[7px] pl-[16px] " + (p.done ? "bg-[#d4edc9]" : "")}>
            <Plane />
            <Star size={22} className="mt-[4px] ml-[16px]" />
          </span>
          <span className="flex justify-center pt-[11px] text-[14px] leading-[22px]">
            <Person />
            <a className={"mt-[-1px] ml-[1px] whitespace-pre " + LINK}>{" " + p.solved}</a>
          </span>
        </div>
      ))}
    </Panel>
  );
}

function QuestionsTable() {
  return (
    <Panel title="Questions about problems">
      <div className="grid h-[33px] grid-cols-[48px_101px_115px_245px_624px] border-b border-[#e1e1e1] text-center leading-[31px] font-bold *:border-[#e1e1e1]">
        <span className="border-r">#</span>
        <span className="border-r">Party</span>
        <span className="border-r">When</span>
        <span className="border-r">Question</span>
        <span className="pr-px">Answer</span>
      </div>
      <div className="grid h-[92px] grid-cols-[48px_101px_115px_245px_624px] items-stretch bg-[#f8f8f8] font-bold *:border-[#e1e1e1]">
        <span className="border-r" />
        <span className="border-r" />
        <span className="flex items-center justify-center border-r text-center text-[12px] leading-[14px]">
          2017-07-16
          <br />
          18:49:18
        </span>
        <span className="flex items-center border-r pl-[5px]">Announcement</span>
        <span className="pt-[6px] pr-[4px] pl-[5px] leading-[20px]">
          Problem B. Five-In-a-Row
          <br />
          *****
          <br />
          In Alice's winning condition the length of line with crosses should be **not less than 5**.
        </span>
      </div>
    </Panel>
  );
}

function ContestBox() {
  return (
    <section className="ml-[18px] h-[190px] w-[364px] rounded-t-[7px] border border-[#b5b5b5] text-center *:border-[#b5b5b5]">
      <div className="h-[31px] border-b text-[18px] leading-[28px] font-bold text-black underline">Educational Codeforces Round 25</div>
      <div className="ml-px h-[34px] border-b bg-[#f5f5f5] text-[20px] leading-[31px] font-bold text-[#3b5998]">Contest is running</div>
      <div className="h-[38px] border-b text-[22.700px] leading-[36px] text-[#777]">00:21:52</div>
      <div className="h-[38px] border-b bg-[#f5f5f5] text-[22.900px] leading-[37px] text-[#777]">Contestant</div>
      <div className="flex justify-center pt-[4px]"><Star size={32} /></div>
    </section>
  );
}

function AskIcon() {
  return (
    <svg width="31" height="32" viewBox="0 0 31 32">
      <ellipse cx="21.500" cy="5" rx="4.500" ry="5" fill="#a32a20" />
      <path d="M18.500 8h6l.5 5c4 1 6 3 6 7 0 2.500-5 3-11 2z" fill="#d63a2c" />
      <ellipse cx="12.500" cy="8.500" rx="5" ry="5" fill="#182f8e" />
      <path d="M9.500 12h6l.5 5.500c4 1 6 3 6 7 0 3-6 3.500-12 3z" fill="#1f4cc6" />
      <path d="M5.500 18h4v5H15v4H9.500v5h-4v-5H0v-4h5.500z" fill="#2fa52c" stroke="#156d16" strokeWidth=".800" />
      <path d="M7.500 19v11M1 25h13" stroke="#8ee07f" strokeWidth="1" />
    </svg>
  );
}

function Page() {
  return (
    <div className="flex h-[933px] bg-white font-['Liberation_Sans',sans-serif]">
      <main className="w-[1821px] pl-[149px]">
        <div className="w-[1523px]">
          <Masthead />
          <div className="font-['Open_Sans',sans-serif]">
            <MainNav />
            <SubNav />
          </div>
          <div className="mt-[8px] flex items-start">
            <div className="w-[1141px]">
              <ProblemsTable />
              <div className="text-right text-[14px] leading-[20px]"><a className={LINK}>Complete problemset</a></div>
              <div className="mt-[35px] flex h-[37px] items-start justify-end text-[18px]">
                <AskIcon />
                <a className={"ml-[5px] leading-[29px] " + LINK}>Ask a question</a>
              </div>
              <QuestionsTable />
            </div>
            <ContestBox />
          </div>
          <hr className="mt-[57px] ml-[-18px] w-[1560px] border-t border-[#c4c4c4]" />
        </div>
      </main>
      <div className="flex w-[18px] flex-col items-center justify-between bg-[#f1f1f1]">
        <div className="flex w-full flex-col items-center">
          <svg className="mt-[7px]" width="9" height="5" viewBox="0 0 9 5"><path d="M0 5L4.500 0 9 5z" fill="#a3a3a3" /></svg>
          <i className="mt-[7px] h-[797px] w-[15px] bg-[#c1c1c1]" />
        </div>
        <svg className="mb-[7px]" width="9" height="5" viewBox="0 0 9 5"><path d="M0 0l4.500 5L9 0z" fill="#505050" /></svg>
      </div>
    </div>
  );
}

function TerminalWindow() {
  return (
    <div className="absolute top-[1045px] left-[775px] flex h-[35px] w-[882px] items-center rounded-t-[8px] bg-linear-to-b from-[#5c5951] to-[#403f3a] pl-[10px] text-[#dfdbd2] shadow-[0_6px_36px_4px_rgba(0,0,0,0.55)]">
      <svg width="70" height="20" viewBox="0 0 70 20" fill="none" stroke="#33322e" strokeWidth="1.300">
        <circle cx="10" cy="10" r="9.300" fill="#ea5a2f" />
        <path d="M6.800 6.800l6.400 6.400M13.200 6.800l-6.400 6.400" stroke="#4b1c0c" />
        <circle cx="34" cy="10" r="9.300" fill="#7f7d75" />
        <path d="M30 10h8" />
        <circle cx="58" cy="10" r="9.300" fill="#7f7d75" />
        <rect x="54.200" y="6.200" width="7.600" height="7.600" />
      </svg>
      <Fit className="ml-[12px] w-[246px] text-[17.500px] leading-[34px] font-bold">m2k@m2k-Inspiron-7460: ~</Fit>
    </div>
  );
}

export default function App() {
  return (
    <div className="relative flex h-[1080px] w-[1920px] flex-col overflow-hidden font-['Open_Sans',sans-serif]">
      <TopPanel />
      <div className="flex h-[1050px]">
        <Launcher />
        <div className="flex w-[1839px] flex-col bg-[#f1f1f1]">
          <TabStrip />
          <Toolbar />
          <BookmarksBar />
          <Page />
        </div>
      </div>
      <TerminalWindow />
    </div>
  );
}
